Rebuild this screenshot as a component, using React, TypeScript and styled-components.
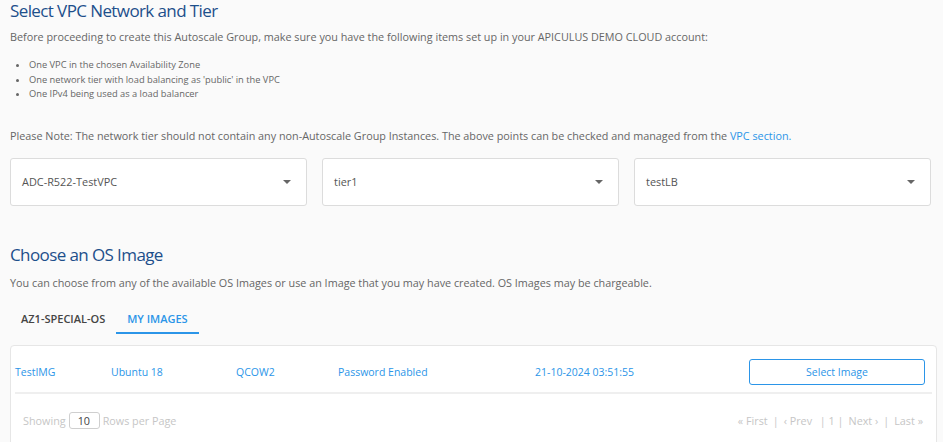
import styled, { createGlobalStyle } from "styled-components";

const GlobalStyle = createGlobalStyle`
  body {
    margin: 0;
    background: #fafafa;
    font-family: "Open Sans", "Liberation Sans", sans-serif;
    color: #666;
  }
`;

const Page = styled.div`
  padding: 0 6px 0 10px;
`;

const Heading = styled.h2`
  margin: 0;
  font-size: 17px;
  font-weight: 400;
  letter-spacing: -0.6px;
  line-height: 21px;
  color: #1d4f8b;
`;

const SubHeading = styled(Heading)`
  margin-top: 37px;
  line-height: 24px;
`;

const Text = styled.p<{ $top: number }>`
  margin: ${(p) => p.$top}px 0 0;
  font-size: 10.8px;
  line-height: 20px;
  color: #666;

  a {
    color: #2b95e8;
    text-decoration: none;
  }
`;

const Bullets = styled.ul`
  margin: 11px 0 0;
  padding-left: 19px;
  font-size: 9.3px;
  line-height: 14.5px;
  color: #666;
`;

const SelectRow = styled.div`
  display: grid;
  grid-template-columns: repeat(3, 1fr);
  gap: 15px;
  margin-top: 12px;
  width: 921px;
`;

const SelectBox = styled.div`
  display: flex;
  align-items: center;
  justify-content: space-between;
  height: 48px;
  box-sizing: border-box;
  padding: 0 15px 0 11px;
  background: #fff;
  border: 1px solid #dcdcdc;
  border-radius: 3px;
  font-size: 10.9px;
  color: #555;
`;

const Caret = styled.span`
  width: 0;
  height: 0;
  border-left: 4.5px solid transparent;
  border-right: 4.5px solid transparent;
  border-top: 4.5px solid #666;
`;

const Tabs = styled.div`
  display: flex;
  margin-top: 12px;
`;

const Tab = styled.div<{ $active?: boolean }>`
  padding: 0 11px;
  height: 27px;
  line-height: 27px;
  font-size: 11px;
  font-weight: 600;
  color: ${(p) => (p.$active ? "#2b95e8" : "#444")};
  border-bottom: 2px solid ${(p) => (p.$active ? "#2b95e8" : "transparent")};
`;

const Card = styled.div`
  margin-top: 11px;
  background: #fff;
  border: 1px solid #e6e6e6;
  border-radius: 4px;
  padding: 0 4px;
  height: 120px;
`;

const ImageRow = styled.div`
  display: grid;
  grid-template-columns: 96px 125px 102px 197px 214px 176px;
  align-items: center;
  height: 40px;
  padding-top: 6px;
  border-bottom: 2px solid #efefef;
  font-size: 10.5px;
  color: #2b95e8;
`;

const SelectButton = styled.button`
  height: 26px;
  background: #fff;
  border: 1px solid #2b95e8;
  border-radius: 3px;
  color: #2b95e8;
  font-family: inherit;
  font-size: 10.5px;
`;

const Footer = styled.div`
  display: flex;
  align-items: center;
  justify-content: space-between;
  height: 54px;
  padding: 0 9px 0 8px;
  font-size: 10.8px;
  color: #c6c6c6;
`;

const Showing = styled.div`
  display: flex;
  align-items: center;
  gap: 3px;
`;

const PageInput = styled.span`
  display: inline-block;
  width: 31px;
  height: 17px;
  box-sizing: border-box;
  border: 1px solid #cfcfcf;
  border-radius: 3px;
  padding-left: 8px;
  line-height: 15px;
  color: #444;
`;

const Pager = styled.div`
  display: flex;
  gap: 5px;
  white-space: pre;
`;

export default function App() {
  return (
    <Page>
      <GlobalStyle />
      <Heading>Select VPC Network and Tier</Heading>
      <Text $top={6}>
        Before proceeding to create this Autoscale Group, make sure you have the
        following items set up in your APICULUS DEMO CLOUD account:
      </Text>
      <Bullets>
        <li>One VPC in the chosen Availability Zone</li>
        <li>One network tier with load balancing as 'public' in the VPC</li>
        <li>One IPv4 being used as a load balancer</li>
      </Bullets>
      <Text $top={24}>
        Please Note: The network tier should not contain any non-Autoscale Group
        Instances. The above points can be checked and managed from the{" "}
        <a href="#">VPC section.</a>
      </Text>
      <SelectRow>
        {["ADC-R522-TestVPC", "tier1", "testLB"].map((v) => (
          <SelectBox key={v}>
            {v}
            <Caret />
          </SelectBox>
        ))}
      </SelectRow>
      <SubHeading>Choose an OS Image</SubHeading>
      <Text $top={6}>
        You can choose from any of the available OS Images or use an Image that
        you may have created. OS Images may be chargeable.
      </Text>
      <Tabs>
        <Tab>AZ1-SPECIAL-OS</Tab>
        <Tab $active>MY IMAGES</Tab>
      </Tabs>
      <Card>
        <ImageRow>
          <span>TestIMG</span>
          <span>Ubuntu 18</span>
          <span>QCOW2</span>
          <span>Password Enabled</span>
          <span>21-10-2024 03:51:55</span>
          <SelectButton>Select Image</SelectButton>
        </ImageRow>
        <Footer>
          <Showing>
            Showing <PageInput>10</PageInput> Rows per Page
          </Showing>
          <Pager>
            <span>« First</span>
            <span>|</span>
            <span>‹ Prev </span>
            <span>| 1 |</span>
            <span>Next ›</span>
            <span>|</span>
            <span>Last »</span>
          </Pager>
        </Footer>
      </Card>
    </Page>
  );
}
